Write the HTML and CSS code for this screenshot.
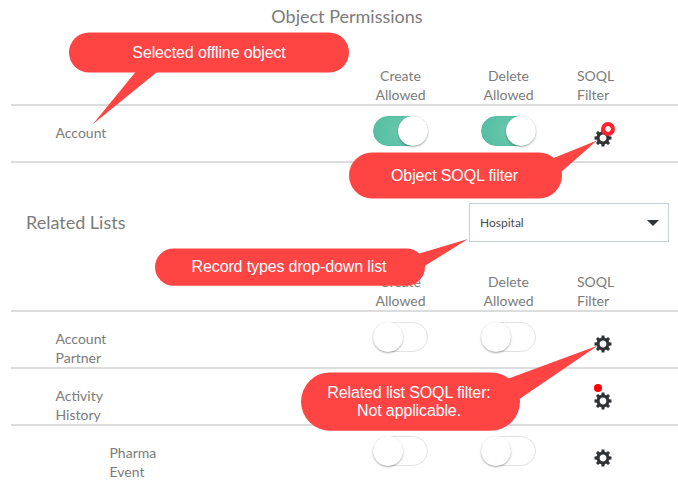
FILE: index.html
```
<!DOCTYPE html>
<html lang="en">
<head>
<meta charset="utf-8">
<title>Object Permissions</title>
<link rel="stylesheet" href="styles.css">
</head>
<body>
<svg class="defs" width="0" height="0">
  <defs>
    <symbol id="gear" viewBox="-9 -9 18 18">
      <g fill="#2f3335">
        <g id="teeth">
          <path d="M-1.8-5L-1.4-8.5H1.4L1.8-5ZM-1.8 5L-1.4 8.5H1.4L1.8 5ZM-5-1.8L-8.5-1.4V1.4L-5 1.8ZM5-1.8L8.5-1.4V1.4L5 1.8Z"/>
        </g>
        <use href="#teeth" transform="rotate(45)"/>
      </g>
      <circle r="4.9" fill="none" stroke="#2f3335" stroke-width="3"/>
    </symbol>
  </defs>
</svg>
<main class="page">
  <h1 class="title">Object Permissions</h1>
  <div class="row head">
    <span></span><span class="center">Create<br>Allowed</span><span class="center">Delete<br>Allowed</span><span class="soql">SOQL<br>Filter</span>
  </div>
  <div class="row">
    <span class="name">Account</span>
    <span class="toggle on"></span><span class="toggle on"></span>
    <span class="filter"><svg class="gear"><use href="#gear"/></svg><i class="ring"></i></span>
  </div>
  <section class="related">
    <h2>Related Lists</h2>
    <div class="select"><span>Hospital</span><svg width="12" height="6"><path d="M0 0H12L6 6Z" fill="#2f3335"/></svg></div>
  </section>
  <div class="row head">
    <span></span><span class="center">Create<br>Allowed</span><span class="center">Delete<br>Allowed</span><span class="soql">SOQL<br>Filter</span>
  </div>
  <div class="row">
    <span class="name">Account<br>Partner</span>
    <span class="toggle"></span><span class="toggle"></span>
    <span class="filter"><svg class="gear"><use href="#gear"/></svg></span>
  </div>
  <div class="row">
    <span class="name">Activity<br>History</span>
    <span></span><span></span>
    <span class="filter"><svg class="gear"><use href="#gear"/></svg><i class="dot"></i></span>
  </div>
  <div class="row last">
    <span class="name child">Pharma<br>Event</span>
    <span class="toggle"></span><span class="toggle"></span>
    <span class="filter"><svg class="gear"><use href="#gear"/></svg></span>
  </div>
</main>
<svg class="bubbles" width="678" height="481" viewBox="0 0 678 481" fill="#ff4444">
  <rect x="69" y="32.4" width="280" height="40.2" rx="20.1"/>
  <path d="M135.500 72L93 124L157 72Z"/>
  <rect x="349" y="152.400" width="213" height="46" rx="23"/>
  <path d="M550 159.500L597 140.500L560 173Z"/>
  <rect x="155" y="248.400" width="270" height="37.400" rx="18.700"/>
  <path d="M416 254.500L468 239L423 267Z"/>
  <rect x="301" y="372.400" width="219" height="58.400" rx="29.200"/>
  <path d="M506 379.500L598 345.500L518 400Z"/>
</svg>
<div class="note note-object">Selected offline object</div>
<div class="note note-filter">Object SOQL filter</div>
<div class="note note-types">Record types drop-down list</div>
<div class="note note-related">Related list SOQL filter:<br>Not applicable.</div>
</body>
</html>
```
FILE: styles.css
```
* { box-sizing: border-box; }
body {
  margin: 0;
  height: 481px;
  overflow: hidden;
  position: relative;
  background: #fff;
  color: #7b7b7b;
  font: 14px/19px Lato, "Liberation Sans", sans-serif;
}
.defs { position: absolute; }
.page { padding-left: 11px; }
.title {
  margin: 0;
  height: 66px;
  padding: 4px 0 0 5px;
  font-size: 18px;
  font-weight: 400;
  line-height: 24px;
  text-align: center;
}
.row {
  display: grid;
  grid-template-columns: 335px 108px 108px 116px;
  height: 57px;
  border-bottom: 2px solid #dcdcdc;
}
.head { height: 40px; }
.last { border: 0; }
.center { padding-left: 1px; text-align: center; }
.soql { padding-left: 15px; }
.name { padding: 17px 0 0 44.500px; }
.child { padding-left: 98.500px; }
.toggle {
  justify-self: center;
  width: 55px;
  height: 30px;
  margin-top: 10px;
  border: 1px solid #e2e2e2;
  border-radius: 15px;
  background: #fff;
}
.toggle::before {
  content: "";
  display: block;
  width: 30px;
  height: 30px;
  margin: -1px;
  border-radius: 50%;
  background: #fff;
  box-shadow: 0 1px 2px rgba(0, 0, 0, .35);
}
.on {
  border-color: #54bda1;
  background: radial-gradient(circle at center, #68c8ae, #54bda1);
}
.on::before { margin-left: 24px; }
.filter {
  position: relative;
  padding: 22.500px 0 0 32px;
}
.gear { display: block; width: 18px; height: 18px; }
.ring {
  position: absolute;
  left: 39px;
  top: 16px;
  width: 14px;
  height: 14px;
  border-radius: 50%;
  background: radial-gradient(circle, #fff 2.400px, #ff2430 3.200px);
}
.dot {
  position: absolute;
  left: 32px;
  top: 15px;
  width: 8px;
  height: 8px;
  border-radius: 50%;
  background: #f00;
}
.related {
  display: flex;
  justify-content: space-between;
  height: 109px;
  padding: 40px 9px 0 15px;
}
.related h2 {
  margin: 7px 0 0;
  font-size: 18px;
  font-weight: 400;
  line-height: 24px;
}
.select {
  display: flex;
  align-items: center;
  justify-content: space-between;
  width: 200px;
  height: 39px;
  padding: 0 9px 0 10px;
  border: 1px solid #c5d0d8;
  color: #4a4a4a;
  font-size: 12px;
}
.bubbles { position: absolute; left: 0; top: 0; }
.note {
  position: absolute;
  color: #fff;
  font: 16px/18px "Liberation Sans", Arial, sans-serif;
  letter-spacing: -.13px;
  text-align: center;
  white-space: nowrap;
}
.note-object { left: 69px; top: 44px; width: 280px; }
.note-filter { left: 348px; top: 167px; width: 213px; }
.note-types { left: 154px; top: 258px; width: 270px; }
.note-related { left: 300px; top: 384px; width: 218px; }
```
